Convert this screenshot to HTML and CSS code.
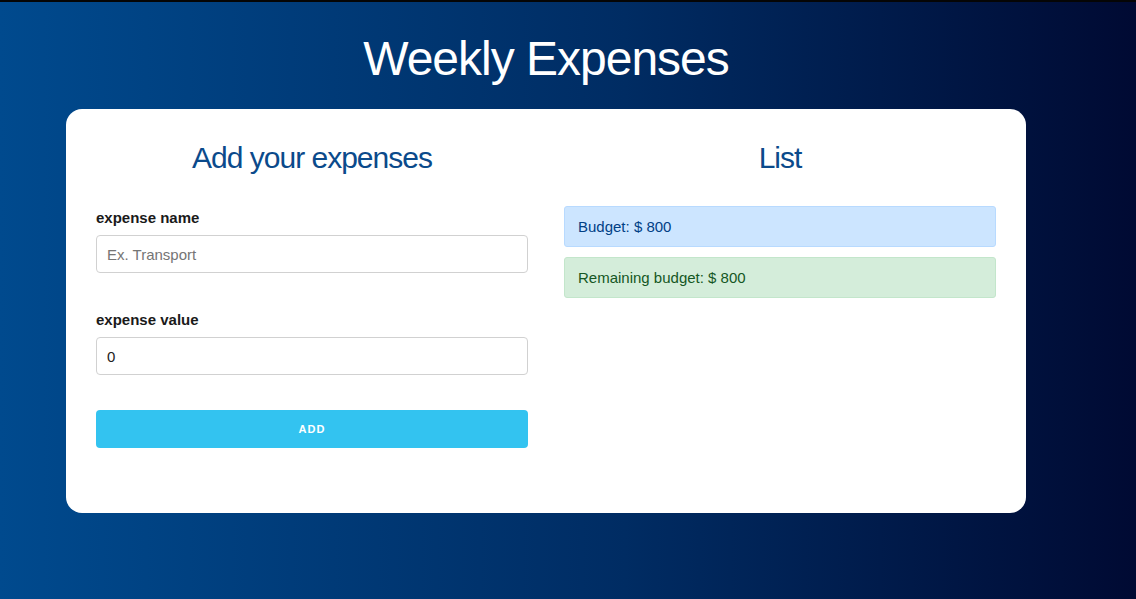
FILE: index.html
```html
<!DOCTYPE html>
<html lang="en">
<head>
    <meta charset="UTF-8">
    <meta name="viewport" content="width=device-width, initial-scale=1.0">
    <title>Weekly Expenses</title>
    <link rel="stylesheet" href="styles.css">
</head>

<body>

    <div class="page">
        <h1 class="page-title">Weekly Expenses</h1>

        <div class="card">
            <div class="column">
                <h2 class="column-title">Add your expenses</h2>
                <form id="expenseForm" class="expense-form">
                    <div class="field">
                        <label for="input_name">expense name</label>
                        <input type="text" id="input_name" placeholder="Ex. Transport">
                    </div>
                    <div class="field">
                        <label for="input_value">expense value</label>
                        <input type="number" id="input_value" value="0">
                    </div>
                    <button type="submit" class="btn-add">Add</button>
                </form>
            </div>

            <div class="column">
                <h2 class="column-title">List</h2>
                <div class="alert alert-budget">Budget: $ 800</div>
                <div class="alert alert-remaining">Remaining budget: $ 800</div>
            </div>
        </div>
    </div>

</body>
</html>
```

FILE: styles.css
```css
* {
    box-sizing: border-box;
}
body {
    margin: 0;
    min-height: 100vh;
    border-top: 2px solid #050505;
    background: linear-gradient(to right, #004a8e 0%, #002c63 55%, #000a33 100%);
    font-family: "Liberation Sans", Arial, sans-serif;
    font-size: 15px;
    color: #222;
}
.page {
    width: 960px;
    margin-left: 66px;
    padding-top: 28px;
}
.page-title {
    margin: 0 0 21px;
    font-size: 48px;
    font-weight: normal;
    line-height: 58px;
    letter-spacing: -1px;
    text-align: center;
    color: #fff;
}
.card {
    display: grid;
    grid-template-columns: 1fr 1fr;
    column-gap: 36px;
    padding: 29px 30px 65px;
    background-color: #fff;
    border-radius: 16px;
}
.column-title {
    margin: 0 0 28px;
    font-size: 30px;
    font-weight: normal;
    line-height: 40px;
    letter-spacing: -1px;
    text-align: center;
    color: #0b4a8b;
}
.expense-form {
    display: flex;
    flex-direction: column;
    gap: 35px;
}
.field label {
    display: block;
    margin-bottom: 5px;
    font-weight: bold;
    line-height: 24px;
    color: #1a1a1a;
}
.field input {
    display: block;
    width: 100%;
    height: 38px;
    padding: 6px 10px;
    border: 1px solid #d1d1d1;
    border-radius: 4px;
    font-family: inherit;
    font-size: 15px;
    color: #222;
    background-color: #fff;
    outline: none;
}
.field input::placeholder {
    color: #757575;
}
.field input::-webkit-outer-spin-button,
.field input::-webkit-inner-spin-button {
    -webkit-appearance: none;
    margin: 0;
}
.btn-add {
    height: 38px;
    width: 100%;
    border: none;
    border-radius: 4px;
    background-color: #33c3f0;
    color: #fff;
    font-family: inherit;
    font-size: 11px;
    font-weight: bold;
    letter-spacing: 1px;
    text-transform: uppercase;
    cursor: pointer;
}
.alert {
    padding: 8px 13px;
    margin-bottom: 10px;
    border: 1px solid transparent;
    border-radius: 3px;
    line-height: 23px;
}
.alert-budget {
    background-color: #cce5ff;
    border-color: #b8daff;
    color: #004085;
}
.alert-remaining {
    background-color: #d4edda;
    border-color: #c3e6cb;
    color: #155724;
}
```
